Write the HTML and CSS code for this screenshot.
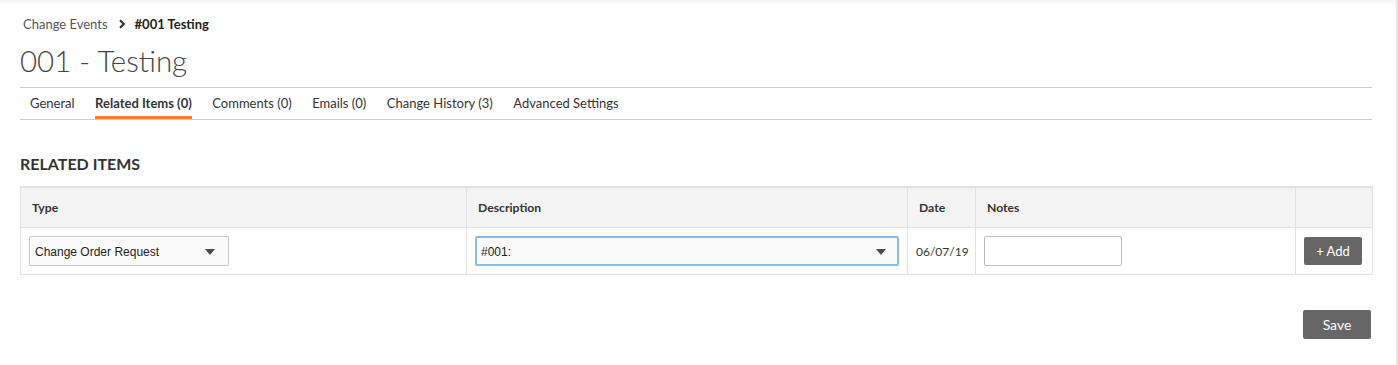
FILE: index.html
```html
<!DOCTYPE html>
<html>
  <head>
    <meta name="viewport" content="width=device-width, initial-scale=1.0" />
    <meta charset="utf-8" />
    <title>001 - Testing</title>
    <link rel="stylesheet" href="styles.css">
  </head>
  <body>
    <div class="page">
      <div class="breadcrumb">
        <span class="breadcrumb__link">Change Events</span>
        <svg class="breadcrumb__sep" width="8" height="10" viewBox="0 0 8 10">
          <path d="M2 1.2 L5.8 5 L2 8.8" fill="none" stroke="#333" stroke-width="2.2" />
        </svg>
        <span class="breadcrumb__current">#001 Testing</span>
      </div>

      <h1 class="page__title">001 - Testing</h1>

      <nav class="tabs">
        <span class="tabs__item">General</span>
        <span class="tabs__item tabs__item--active">Related Items (0)</span>
        <span class="tabs__item">Comments (0)</span>
        <span class="tabs__item">Emails (0)</span>
        <span class="tabs__item">Change History (3)</span>
        <span class="tabs__item">Advanced Settings</span>
      </nav>

      <h2 class="section__title">RELATED ITEMS</h2>

      <table class="items">
        <colgroup>
          <col style="width: 446px" />
          <col style="width: 441px" />
          <col style="width: 68px" />
          <col style="width: 320px" />
          <col style="width: 77px" />
        </colgroup>
        <thead>
          <tr>
            <th>Type</th>
            <th>Description</th>
            <th>Date</th>
            <th>Notes</th>
            <th></th>
          </tr>
        </thead>
        <tbody>
          <tr>
            <td>
              <div class="select select--type">
                <span class="select__value">Change Order Request</span>
                <svg class="select__arrow" width="10" height="6" viewBox="0 0 10 6"><path d="M0 0 H10 L5 6 Z" fill="#4a4a4a" /></svg>
              </div>
            </td>
            <td>
              <div class="select select--focus">
                <span class="select__value">#001:</span>
                <svg class="select__arrow" width="10" height="6" viewBox="0 0 10 6"><path d="M0 0 H10 L5 6 Z" fill="#4a4a4a" /></svg>
              </div>
            </td>
            <td class="items__date">06/07/19</td>
            <td><input class="items__input" type="text" /></td>
            <td><button class="button button--small">+ Add</button></td>
          </tr>
        </tbody>
      </table>

      <div class="actions">
        <button class="button">Save</button>
      </div>
    </div>
  </body>
</html>
```

FILE: styles.css
```css
body {
  margin: 0;
  background: #ffffff;
  font-family: "Lato", sans-serif;
  color: #333333;
}

.page {
  box-sizing: border-box;
  width: 1398px;
  height: 365px;
  padding: 0 24px 0 20px;
  border-right: 2px solid #e8e8e8;
  background: linear-gradient(#f3f3f3, #ffffff 6px);
}

.breadcrumb {
  display: flex;
  align-items: center;
  padding: 16px 0 0 3px;
  height: 16px;
  font-size: 13px;
  line-height: 16px;
}

.breadcrumb__link {
  color: #555555;
}

.breadcrumb__sep {
  margin: 0 9px 0 10px;
}

.breadcrumb__current {
  font-weight: 700;
  color: #222222;
}

.page__title {
  margin: 10px 0 0;
  padding-bottom: 8px;
  border-bottom: 1px solid #cccccc;
  font-size: 29.5px;
  font-weight: 300;
  line-height: 37px;
  color: #444444;
}

.tabs {
  display: flex;
  gap: 20.5px;
  padding-left: 10px;
  border-bottom: 1px solid #cccccc;
}

.tabs__item {
  padding: 5px 0 3px;
  border-bottom: 3px solid transparent;
  font-size: 13px;
  line-height: 20px;
  color: #333333;
}

.tabs__item--active {
  font-weight: 700;
  border-bottom-color: #f47b3e;
}

.section__title {
  margin: 34px 0 0;
  font-size: 16px;
  font-weight: 700;
  line-height: 20px;
  color: #333333;
}

.items {
  margin-top: 12px;
  width: 1352px;
  table-layout: fixed;
  border-collapse: collapse;
  border: 1px solid #e2e2e2;
  border-top: 2px solid #e2e2e2;
}

.items th {
  height: 39px;
  padding: 0 11px;
  text-align: left;
  background: #f4f4f4;
  border: 1px solid #e2e2e2;
  font-size: 12.2px;
  font-weight: 700;
  color: #333333;
}

.items td {
  height: 30px;
  padding: 8px 8px;
  border: 1px solid #e2e2e2;
  font-size: 12px;
  vertical-align: middle;
}

.items__date {
  color: #333333;
}

.select {
  box-sizing: border-box;
  display: flex;
  align-items: center;
  justify-content: space-between;
  height: 30px;
  padding: 1px 13px 0 5px;
  border: 1px solid #c6c6c6;
  border-radius: 2px;
  background: #fafafa;
  font-family: "Liberation Sans", Arial, sans-serif;
  font-size: 12px;
  color: #222222;
}

.select--type {
  width: 200px;
}

.select--focus {
  border: 2px solid #8cbcdb;
  padding: 1px 11px 0 4px;
  background: #fafafa;
}

.items__input {
  box-sizing: border-box;
  display: block;
  width: 138px;
  height: 30px;
  margin: 0;
  border: 1px solid #bdbdbd;
  border-radius: 2px;
  background: #ffffff;
}

.button {
  box-sizing: border-box;
  width: 68px;
  height: 29px;
  border: none;
  border-radius: 2px;
  background: #666666;
  color: #ffffff;
  font: 400 14px "Lato", sans-serif;
  cursor: pointer;
}

.button--small {
  display: block;
  width: 58px;
  height: 28px;
  font-size: 13px;
}

.actions {
  display: flex;
  justify-content: flex-end;
  margin-top: 35px;
  padding-right: 1px;
}
```
